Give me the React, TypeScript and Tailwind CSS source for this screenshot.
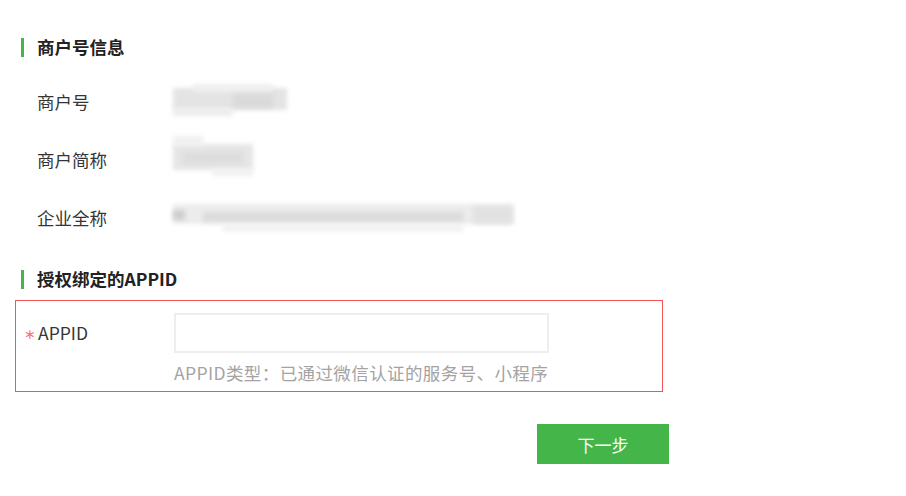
import React from 'react';

const font = { fontFamily: '"Noto Sans CJK SC", "Liberation Sans", sans-serif' };

// 打码的值，用几块模糊的灰色块代替
const Blur = ({ blocks }: { blocks: [number, number, number, number, string][] }) => (
    <div className="relative h-[40px] w-[360px]">
        {blocks.map(([x, y, w, h, c], i) => (
            <div
                key={i}
                className="absolute blur-[2px]"
                style={{ left: x, top: y, width: w, height: h, background: c }}
            />
        ))}
    </div>
);

const SectionTitle = ({ children }: { children: React.ReactNode }) => (
    <div className="flex items-center h-[20px] pl-[6px]">
        <span className="w-[3px] h-[19px] shrink-0 bg-[#44b549]" />
        <h3 className="ml-[13px] text-[17.5px] font-bold text-[#222] leading-none">{children}</h3>
    </div>
);

const InfoRow = ({ label, blocks }: { label: string; blocks: [number, number, number, number, string][] }) => (
    <div className="flex items-center h-[58px] pl-[22px]">
        <span className="w-[136px] text-[17.5px] text-[#353535] leading-none">{label}</span>
        <Blur blocks={blocks} />
    </div>
);

export default function App() {
    return (
        <div className="w-[906px] h-[496px] bg-white pl-[15px] pt-[37px]" style={font}>
            <SectionTitle>商户号信息</SectionTitle>

            <div className="mt-[16px]">
                <InfoRow
                    label="商户号"
                    blocks={[
                        [0, 6, 114, 22, '#e4e4e4'],
                        [20, 2, 80, 8, '#efefef'],
                        [0, 26, 60, 8, '#ededed'],
                        [60, 12, 40, 14, '#dadada'],
                    ]}
                />
                <InfoRow
                    label="商户简称"
                    blocks={[
                        [0, 4, 80, 26, '#e6e6e6'],
                        [0, -4, 30, 10, '#f0f0f0'],
                        [40, 28, 40, 8, '#f0f0f0'],
                        [10, 12, 60, 12, '#dddddd'],
                    ]}
                />
                <InfoRow
                    label="企业全称"
                    blocks={[
                        [0, 6, 340, 20, '#ececec'],
                        [0, 12, 12, 10, '#cfcfcf'],
                        [30, 14, 260, 10, '#dcdcdc'],
                        [300, 8, 40, 18, '#e2e2e2'],
                        [50, 26, 240, 8, '#f2f2f2'],
                    ]}
                />
            </div>

            <div className="mt-[22px]">
                <SectionTitle>授权绑定的APPID</SectionTitle>
            </div>

            <div className="mt-[11px] w-[648px] h-[92px] border border-[#f55454] pt-[12px]">
                <div className="flex">
                    <div className="w-[158px] h-[40px] flex items-center pl-[8px]">
                        <span className="text-[14px] text-[#f27a7a] leading-none w-[14px]">∗</span>
                        <span className="text-[17.5px] text-[#353535] leading-none">APPID</span>
                    </div>
                    <div className="flex flex-col">
                        <input
                            type="text"
                            className="w-[375px] h-[40px] border-2 border-[#eeeeee] outline-none px-2 text-[15px]"
                        />
                        <span className="mt-[11px] text-[17.5px] tracking-[0.4px] text-[#a3a3a3] leading-none">
                            APPID类型：已通过微信认证的服务号、小程序
                        </span>
                    </div>
                </div>
            </div>

            <div className="mt-[32px] pl-[522px]">
                <button className="w-[132px] h-[40px] bg-[#44b549] text-white text-[17px] leading-none">
                    下一步
                </button>
            </div>
        </div>
    );
}
